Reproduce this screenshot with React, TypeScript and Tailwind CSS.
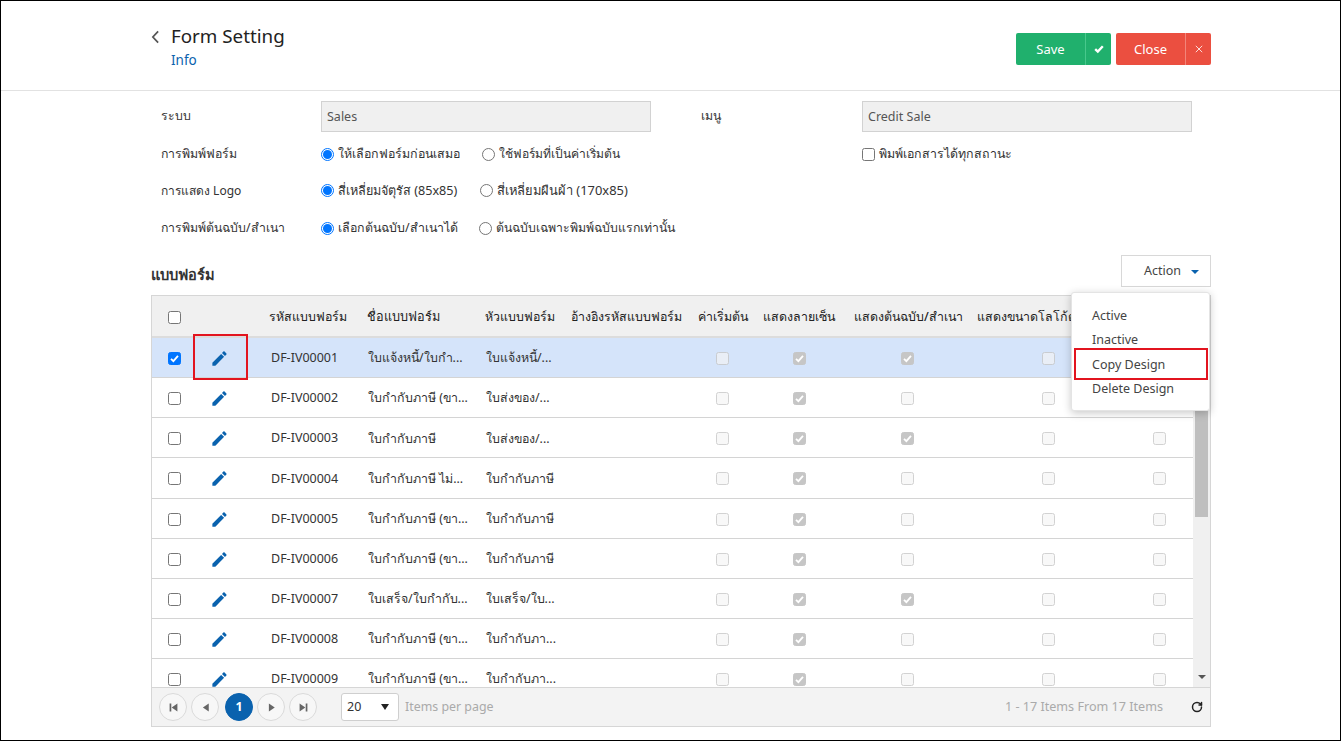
import React from "react";
import { RotateCw } from "lucide-react";

const rows: [string, string, string, boolean, boolean][] = [
  ["DF-IV00001", "ใบแจ้งหนี้/ใบกำ...", "ใบแจ้งหนี้/...", true, false],
  ["DF-IV00002", "ใบกำกับภาษี (ขา...", "ใบส่งของ/...", false, true],
  ["DF-IV00003", "ใบกำกับภาษี", "ใบส่งของ/...", true, true],
  ["DF-IV00004", "ใบกำกับภาษี ไม่...", "ใบกำกับภาษี", false, true],
  ["DF-IV00005", "ใบกำกับภาษี (ขา...", "ใบกำกับภาษี", false, true],
  ["DF-IV00006", "ใบกำกับภาษี (ขา...", "ใบกำกับภาษี", false, true],
  ["DF-IV00007", "ใบเสร็จ/ใบกำกับ...", "ใบเสร็จ/ใบ...", true, true],
  ["DF-IV00008", "ใบกำกับภาษี (ขา...", "ใบกำกับภา...", false, true],
  ["DF-IV00009", "ใบกำกับภาษี (ขา...", "ใบกำกับภา...", false, true],
];

const COLS = "grid grid-cols-[42px_67px_98px_118px_86px_127px_65px_91px_123px_158px_66px]";

function Tick() {
  return (
    <svg viewBox="0 0 12 12" className="w-[11px] h-[11px]">
      <path d="M2.2 6.3 4.8 8.9 9.8 3.2" fill="none" stroke="#fff" strokeWidth="2" />
    </svg>
  );
}

function Box({ checked = false, className = "" }: { checked?: boolean; className?: string }) {
  return (
    <span
      className={`w-[13px] h-[13px] shrink-0 rounded-[2.5px] border flex items-center justify-center ${
        checked ? "bg-[#0075ff] border-[#0075ff]" : "bg-white border-[#767676]"
      } ${className}`}
    >
      {checked && <Tick />}
    </span>
  );
}

function Dis({ checked = false, tinted = false, className = "" }: { checked?: boolean; tinted?: boolean; className?: string }) {
  return (
    <span className={`flex items-center justify-center ${className}`}>
      <span
        className={`w-[13px] h-[13px] rounded-[2.5px] border flex items-center justify-center ${
          checked
            ? "bg-[#c6c6c6] border-[#c6c6c6]"
            : tinted
              ? "bg-[#e9eef6] border-[#c9ccd0]"
              : "bg-[#f8f8f8] border-[#d2d2d2]"
        }`}
      >
        {checked && <Tick />}
      </span>
    </span>
  );
}

function Radio({ on = false }: { on?: boolean }) {
  return (
    <span
      className={`w-[13px] h-[13px] shrink-0 rounded-full border bg-white flex items-center justify-center ${
        on ? "border-[#0075ff]" : "border-[#767676]"
      }`}
    >
      {on && <span className="w-[9px] h-[9px] rounded-full bg-[#0075ff]" />}
    </span>
  );
}

function Opt({ on = false, label, className = "" }: { on?: boolean; label: string; className?: string }) {
  return (
    <span className={`flex items-center gap-[4px] whitespace-nowrap ${className}`}>
      <Radio on={on} />
      <span>{label}</span>
    </span>
  );
}

function Pencil() {
  return (
    <svg viewBox="0 0 24 24" className="w-[19px] h-[19px] ml-[16px]">
      <path
        fill="#0a62ae"
        d="M3 17.25V21h3.75L17.81 9.94l-3.75-3.75L3 17.25zM20.71 7.04c.39-.39.39-1.02 0-1.41l-2.34-2.34c-.39-.39-1.02-.39-1.41 0l-1.83 1.83 3.75 3.75 1.83-1.83z"
      />
    </svg>
  );
}

function PageBtn({ children, active = false, className = "" }: { children: React.ReactNode; active?: boolean; className?: string }) {
  return (
    <span
      className={`w-[28px] h-[28px] rounded-full border flex items-center justify-center ${
        active ? "bg-[#0a62ae] border-[#0a62ae] text-white font-bold" : "bg-[#f7f7f7] border-[#dadada]"
      } ${className}`}
    >
      {children}
    </span>
  );
}

function Tri({ d }: { d: string }) {
  return (
    <svg viewBox="0 0 10 10" className="w-[13px] h-[13px]">
      <path d={d} fill="#666" />
    </svg>
  );
}

export default function App() {
  return (
    <div className="relative w-[1341px] h-[741px] bg-white overflow-hidden text-[12.3px] text-[#333] font-['Noto_Sans','Liberation_Sans',sans-serif]">
      {/* Page header */}
      <header className="h-[91px] border-b border-[#e2e2e2] flex justify-between pl-[151px] pr-[130px]">
        <div className="flex">
          <svg viewBox="0 0 10 16" className="w-[9px] h-[14px] mt-[30px]">
            <path d="M8 1.5 2 8l6 6.5" fill="none" stroke="#555" strokeWidth="2" />
          </svg>
          <div className="ml-[11px] pt-[24px]">
            <div className="text-[18.8px] leading-[24px] text-[#222]">Form Setting</div>
            <div className="text-[13.5px] leading-[16px] mt-[4px] text-[#0a62ae]">Info</div>
          </div>
        </div>
        <div className="flex gap-[5px] pt-[33px] text-white text-[13px]">
          <div className="flex h-[32px] bg-[#20b06d] rounded-[2px]">
            <span className="w-[69px] pt-[1px] flex items-center justify-center">Save</span>
            <span className="w-[26px] border-l border-[#48c88c] flex items-center justify-center">
              <svg viewBox="0 0 10 10" className="w-[10px] h-[10px]">
                <path d="M1.2 5.2 3.8 7.6 8.8 2.2" fill="none" stroke="#fff" strokeWidth="2.4" />
              </svg>
            </span>
          </div>
          <div className="flex h-[32px] bg-[#eb4f40] rounded-[2px]">
            <span className="w-[69px] pt-[1px] flex items-center justify-center">Close</span>
            <span className="w-[26px] border-l border-[#f2857a] flex items-center justify-center">
              <svg viewBox="0 0 10 10" className="w-[8px] h-[8px]">
                <path d="M1 1 9 9M9 1 1 9" fill="none" stroke="#fff" strokeWidth="1" />
              </svg>
            </span>
          </div>
        </div>
      </header>

      {/* Form */}
      <section className="pl-[161px] pt-[10px]">
        <div className="flex items-center h-[31px]">
          <span className="w-[160px]">ระบบ</span>
          <div className="w-[330px] h-[31px] bg-[#f0f0f0] border border-[#d2d2d2] px-[5px] leading-[29px] text-[12.5px] text-[#555]">Sales</div>
          <span className="w-[211px] pl-[50px]">เมนู</span>
          <div className="w-[330px] h-[31px] bg-[#f0f0f0] border border-[#d2d2d2] px-[5px] leading-[29px] text-[12.5px] text-[#555]">Credit Sale</div>
        </div>
        <div className="flex items-center h-[37px] mt-[3px] pt-[2px]">
          <span className="w-[160px]">การพิมพ์ฟอร์ม</span>
          <Opt on label="ให้เลือกฟอร์มก่อนเสมอ" className="w-[161px] text-[12.4px]" />
          <Opt label="ใช้ฟอร์มที่เป็นค่าเริ่มต้น" className="w-[380px] text-[12.1px]" />
          <span className="flex items-center gap-[4px] text-[12.4px]">
            <Box />
            <span>พิมพ์เอกสารได้ทุกสถานะ</span>
          </span>
        </div>
        <div className="flex items-center h-[37px] pt-[1px]">
          <span className="w-[160px] text-[12px]">การแสดง Logo</span>
          <Opt on label="สี่เหลี่ยมจัตุรัส (85x85)" className="w-[159px] text-[12.6px]" />
          <Opt label="สี่เหลี่ยมผืนผ้า (170x85)" className="text-[12.9px]" />
        </div>
        <div className="flex items-center h-[37px] pt-[2px]">
          <span className="w-[160px]">การพิมพ์ต้นฉบับ/สำเนา</span>
          <Opt on label="เลือกต้นฉบับ/สำเนาได้" className="w-[158px] text-[12.4px]" />
          <Opt label="ต้นฉบับเฉพาะพิมพ์ฉบับแรกเท่านั้น" />
        </div>
      </section>

      {/* Section title + Action */}
      <div className="mt-[9px] ml-[151px] w-[1060px] h-[32px] flex items-center justify-between">
        <span className="font-bold text-[14.6px] pt-[8px]">แบบฟอร์ม</span>
        <div className="w-[90px] h-[32px] border border-[#d8d8d8] bg-white flex items-center pl-[22px] pt-[1px] text-[12.5px] text-[#444]">
          <span>Action</span>
          <span className="ml-[10px] w-0 h-0 border-x-[4px] border-t-[4px] border-x-transparent border-t-[#0a62ae]" />
        </div>
      </div>

      {/* Grid */}
      <div className="mt-[8px] ml-[151px] w-[1060px] h-[432px] border border-[#d6d6d6] flex flex-col">
        <div className={`${COLS} h-[42px] pt-[2px] shrink-0 bg-[#f0f0f0] border-b-2 border-[#dcdcdc] items-center text-[12.4px] font-medium text-[#222] whitespace-nowrap`}>
          <span className="pl-[16px] flex"><Box /></span>
          <span />
          <span className="pl-[8px]">รหัสแบบฟอร์ม</span>
          <span className="pl-[8px] text-[12.7px]">ชื่อแบบฟอร์ม</span>
          <span className="pl-[8px]">หัวแบบฟอร์ม</span>
          <span className="pl-[8px]">อ้างอิงรหัสแบบฟอร์ม</span>
          <span className="pl-[8px]">ค่าเริ่มต้น</span>
          <span className="pl-[8px]">แสดงลายเซ็น</span>
          <span className="pl-[8px]">แสดงต้นฉบับ/สำเนา</span>
          <span className="pl-[8px]">แสดงขนาดโลโก้ต</span>
          <span />
        </div>

        <div className="flex-1 flex min-h-0">
          <div className="w-[1041px] overflow-hidden">
            {rows.map((r, i) => (
              <div
                key={r[0]}
                className={`${COLS} h-[40.125px] pt-[2px] items-center border-b border-[#d4d4d4] whitespace-nowrap text-[12.4px] ${i === 0 ? "bg-[#d5e4fa]" : "bg-white"}`}
              >
                <span className="pl-[16px] flex"><Box checked={i === 0} /></span>
                <span className="flex"><Pencil /></span>
                <span className="pl-[10px] text-[12.5px]">{r[0]}</span>
                <span className="pl-[9px]">{r[1]}</span>
                <span className="pl-[9px]">{r[2]}</span>
                <span />
                <Dis tinted={i === 0} />
                <Dis checked className="pr-[2px]" />
                <Dis checked={r[3]} tinted={i === 0} />
                <Dis tinted={i === 0} />
                <Dis tinted={i === 0} className="pr-[2px]" />
              </div>
            ))}
          </div>
          <div className="w-[17px] bg-[#f0f0f0] relative">
            <div className="mx-[2px] mt-[17px] h-[162px] bg-[#bfbfbf]" />
            <span className="absolute left-[5px] bottom-[8px] w-0 h-0 border-x-[4px] border-t-[4px] border-x-transparent border-t-[#555]" />
          </div>
        </div>

        <div className="h-[39px] shrink-0 bg-[#f3f3f3] border-t border-[#d6d6d6] flex items-center pl-[7px] text-[12.4px]">
          <PageBtn><Tri d="M2 2h1.3v6H2zM8 2v6L3.6 5z" /></PageBtn>
          <PageBtn className="ml-[4px]"><Tri d="M7.5 2v6L3 5z" /></PageBtn>
          <PageBtn active className="ml-[6px]">1</PageBtn>
          <PageBtn className="ml-[4px]"><Tri d="M3 2v6l4.5-3z" /></PageBtn>
          <PageBtn className="ml-[4px]"><Tri d="M2 2v6l4.4-3zM6.7 2H8v6H6.7z" /></PageBtn>
          <div className="ml-[24px] w-[58px] h-[28px] bg-white border border-[#cfcfcf] rounded-[3px] flex items-center justify-between pl-[5px] pr-[9px] text-[12.5px]">
            <span>20</span>
            <span className="w-0 h-0 border-x-[4px] border-t-[6px] border-x-transparent border-t-[#222]" />
          </div>
          <span className="ml-[6px] text-[#aaa]">Items per page</span>
          <span className="ml-auto text-[#aaa] text-[12.6px]">1 - 17 Items From 17 Items</span>
          <RotateCw size={12} strokeWidth={3} className="ml-[28px] mr-[7px] text-[#222]" />
        </div>
      </div>

      {/* Action dropdown */}
      <div className="absolute left-[1071px] top-[292px] w-[139px] h-[119px] bg-white border border-[#e4e4e4] rounded-[3px] shadow-[0_2px_8px_rgba(0,0,0,0.22)] pl-[20px] pt-[11px] text-[12.5px] leading-[24.4px] text-[#444]">
        <div>Active</div>
        <div>Inactive</div>
        <div>Copy Design</div>
        <div>Delete Design</div>
      </div>

      {/* Annotation boxes */}
      <div className="absolute left-[193px] top-[334px] w-[55px] h-[46px] border-2 border-[#e2141f]" />
      <div className="absolute left-[1074px] top-[348px] w-[134px] h-[32px] border-2 border-[#e2141f]" />

      {/* Screenshot frame */}
      <div className="absolute inset-0 border border-black pointer-events-none" />
    </div>
  );
}
